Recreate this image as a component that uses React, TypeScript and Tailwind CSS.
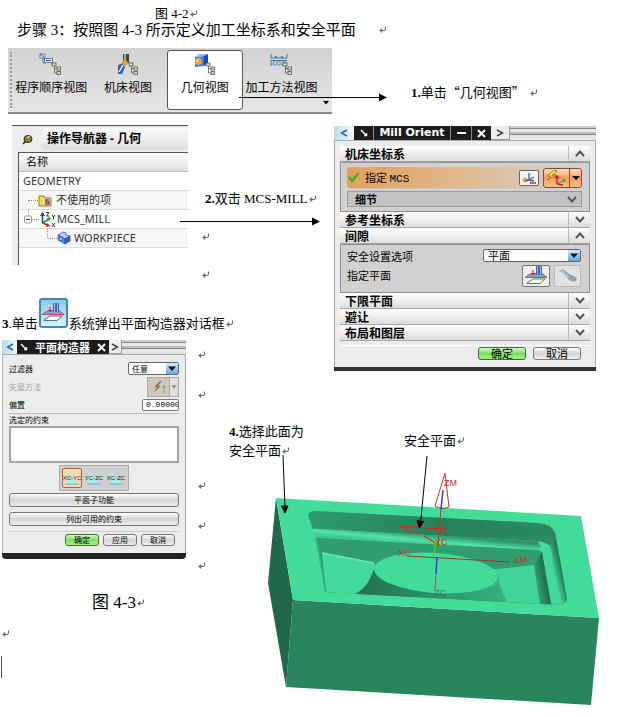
import type { ReactNode } from "react";

function ReturnMark() {
   return (
      <svg width="9" height="8" viewBox="0 0 9 8" fill="none" stroke="#666" className="shrink-0" aria-hidden="true">
         <path d="M7.500 0.500V3Q7.500 4.500 6 4.500H2" />
         <path d="M4 2.500L1.500 4.500L4 6.500Z" fill="#666" strokeWidth="0.500" />
      </svg>
   );
}

function TreeBadge() {
   return (
      <g fill="#d8d8cc" stroke="#55554c" strokeWidth="0.8">
         <path d="M15.500 12v8M15.500 15.500h3M15.500 20h3" fill="none" />
         <rect x="13" y="10" width="4" height="3" />
         <rect x="18" y="14" width="3.500" height="3" />
         <rect x="18" y="18.500" width="3.500" height="3" />
      </g>
   );
}

function ProgramIcon() {
   return (
      <svg width="24" height="22" viewBox="0 0 24 22" aria-hidden="true">
         <g fill="#eef3ff" stroke="#5b7ab8">
            <path d="M4 5v5h3M10 8h3v3" fill="none" />
            <rect x="1" y="1" width="5" height="4" />
            <rect x="5.500" y="5.500" width="8" height="4" />
         </g>
         <path d="M1 1l4 3M7 7.500h5" stroke="#2d4f9b" />
         <TreeBadge />
      </svg>
   );
}

function MachineIcon() {
   return (
      <svg width="24" height="22" viewBox="0 0 24 22" aria-hidden="true">
         <path d="M7 1h6v9H7z" fill="#444" />
         <path d="M8 1h2v8H8z" fill="#aaa" />
         <path d="M2 12l5-2 2 4-3 7H2z" fill="#335fae" />
         <path d="M3 19l4-7" stroke="#fff" strokeWidth="1.500" />
         <circle cx="9" cy="9.500" r="2.500" fill="#f2a71c" stroke="#b76d00" strokeWidth="0.5" />
         <TreeBadge />
      </svg>
   );
}

function GeometryIcon() {
   return (
      <svg width="24" height="22" viewBox="0 0 24 22" aria-hidden="true">
         <path d="M2 4l9-1v10l-9 1z" fill="#3d7bea" />
         <path d="M2 4l4-3h9l-4 2z" fill="#8fbcff" />
         <path d="M11 3l4-2v9l-4 3z" fill="#1c48ae" />
         <circle cx="5.500" cy="8.500" r="3.500" fill="#f6a82a" />
         <circle cx="4.500" cy="7.500" r="1.200" fill="#ffe3a0" />
         <TreeBadge />
      </svg>
   );
}

function MethodIcon() {
   return (
      <svg width="24" height="22" viewBox="0 0 24 22" fill="none" stroke="#3478a8" aria-hidden="true">
         <path d="M1 1v4h16V1M5 5l1-2 1 2M11 5l1-2 1 2" />
         <path d="M1 7.500h16M1 7.500v5l2-2 2 2 2-2 2 2 2-2 2 2 2-2v-3M4 8v2M7 8v2M10 8v2M13 8v2" />
         <TreeBadge />
      </svg>
   );
}

function PlaneIcon() {
   return (
      <svg width="24" height="20" viewBox="0 0 24 20" aria-hidden="true">
         <path d="M3 17l6-4h12l-5 4.500H3z" fill="#fff" stroke="#446655" strokeWidth="0.9" />
         <path d="M1 11.500l6-4h11l5 4z" fill="#7ea2d8" stroke="#d43a3a" strokeWidth="0.9" />
         <path d="M12 0h6v9h-6z" fill="#3e62b5" />
         <path d="M13.500 0v9M16.500 0v9" stroke="#9db9f0" />
         <path d="M9 4v5M7 7l2 2 2-2" stroke="#c22" fill="none" />
      </svg>
   );
}

function Chevron({ up = false }: { up?: boolean }) {
   return (
      <svg width="10" height="7" viewBox="0 0 10 7" fill="none" stroke="#555" strokeWidth="2" aria-hidden="true">
         <path d={up ? "M1 6L5 1.500L9 6" : "M1 1L5 5.500L9 1"} />
      </svg>
   );
}

function DropArrow() {
   return (
      <span className="pointer-events-none absolute right-px top-px bottom-px flex w-3 items-center justify-center bg-linear-to-b from-[#d5ebfc] to-[#58a7df]">
         <svg width="8" height="5" viewBox="0 0 8 5" aria-hidden="true">
            <path d="M0 0.5h8L4 5z" fill="#111" />
         </svg>
      </span>
   );
}

function TitleBar({ title, minimize = false }: { title: string; minimize?: boolean }) {
   return (
      <div className="flex h-[14px] items-stretch">
         <button aria-label="上一个" className={`flex items-center justify-center bg-linear-to-r from-[#bcd8ee] to-[#f6f8fa] ${minimize ? "w-5" : "w-[15px]"}`}>
            <svg width="8" height="8" viewBox="0 0 8 8" fill="none" stroke="#23699f" strokeWidth="1.500"><path d="M7 1L1.500 4L7 7" /></svg>
         </button>
         <button aria-label="移动" className={`flex items-center justify-center bg-[#1c1c1c] ${minimize ? "w-[19px]" : "w-[14px]"}`}>
            <svg width="8" height="8" viewBox="0 0 8 8" stroke="#fff" strokeWidth="1.500"><path d="M1 1L6 6" /><path d="M7 4v3H4z" fill="#fff" strokeWidth="0.5" /></svg>
         </button>
         <h2 className={minimize
            ? "w-[78px] border-x border-[#888] bg-[#1c1c1c] text-center font-['DejaVu_Sans',sans-serif] text-[11px] leading-[14px] font-bold whitespace-nowrap text-white"
            : "w-[63px] bg-[#1c1c1c] text-center text-[11px] leading-[14px] font-bold whitespace-nowrap text-white"}
         >
            {title}
         </h2>
         {minimize && (
            <button aria-label="最小化" className="flex w-[21px] items-center justify-center border-r border-[#888] bg-[#1c1c1c]">
               <span className="h-[2px] w-[9px] bg-white" />
            </button>
         )}
         <button aria-label="关闭" className={`flex items-center justify-center bg-[#1c1c1c] ${minimize ? "w-[19px]" : "w-[15px]"}`}>
            <svg width="9" height="9" viewBox="0 0 9 9" stroke="#fff" strokeWidth="2"><path d="M1 1L8 8M8 1L1 8" /></svg>
         </button>
         <button aria-label="下一个" className={`flex items-center justify-center border-r border-b border-[#999] bg-[#ededed] ${minimize ? "w-[19px]" : "w-[13px]"}`}>
            <svg width="8" height="8" viewBox="0 0 8 8" fill="none" stroke="#444" strokeWidth="1.500"><path d="M1 1L6.500 4L1 7" /></svg>
         </button>
         <div className="flex flex-1 flex-col justify-between bg-[#e6e6e6] pb-[5px]">
            <span className="h-[3px] border-b border-[#888] bg-[#ccc]" />
            <span className="h-[3px] border-b border-[#888] bg-[#bbb]" />
         </div>
      </div>
   );
}

function SectionHeader({ label, open = false }: { label: string; open?: boolean }) {
   return (
      <button className="flex h-4 w-full items-stretch border-b border-[#a5a5a5] bg-linear-to-b from-white to-[#dcdcdc] text-left text-xs leading-[15px] font-bold">
         <span className="flex-1 pl-[5px]">{label}</span>
         <span className="flex w-[22px] items-center justify-center border-l border-[#bbb]">
            <Chevron up={open} />
         </span>
      </button>
   );
}

function DialogButton({ children, primary = false, className = "" }: { children: ReactNode; primary?: boolean; className?: string }) {
   const look = primary
      ? "border-[#3c7030] bg-linear-to-b from-[#d8f8cc] via-[#7fdc62] to-[#a4f486]"
      : "border-[#777] bg-linear-to-b from-white via-[#d4d4d4] to-[#f0f0f0]";
   return (
      <button className={`flex items-center justify-center rounded-[3px] border ${look} ${className}`}>
         {children}
      </button>
   );
}

const views = [
   { label: "程序顺序视图", icon: <ProgramIcon /> },
   { label: "机床视图", icon: <MachineIcon /> },
   { label: "几何视图", icon: <GeometryIcon />, active: true },
   { label: "加工方法视图", icon: <MethodIcon /> },
];

function Toolbar() {
   return (
      <div className="flex h-[66px] w-[324px] border-b-2 border-[#858585] bg-linear-to-b from-[#d2d2d2] to-[#e6e6e6] font-['Noto_Sans_CJK_SC',sans-serif]">
         <div className="my-1 ml-[2px] w-[3px] border-l-2 border-dotted border-[#999]" />
         <div className="grid flex-1 grid-cols-4 py-[2px]">
            {views.map((v) => (
               <button
                  key={v.label}
                  className={v.active
                     ? "flex flex-col items-center gap-1 rounded-[3px] border border-[#555] bg-white pt-[2px] text-xs leading-4 whitespace-nowrap"
                     : "flex flex-col items-center gap-1 border border-transparent pt-[2px] text-xs leading-4 whitespace-nowrap"}
               >
                  {v.icon}
                  {v.label}
               </button>
            ))}
         </div>
         <button aria-label="工具栏选项" className="flex w-[12px] items-end justify-center pb-[7px]">
            <svg width="6" height="4" viewBox="0 0 6 4"><path d="M0 0h6L3 3.500z" /></svg>
         </button>
      </div>
   );
}

function LongArrow({ length }: { length: number }) {
   return (
      <svg width={length} height="9" aria-hidden="true">
         <path d={`M0 4.500H${length - 6}`} stroke="#000" />
         <path d={`M${length - 8} 0.500L${length} 4.500L${length - 8} 8.500Z`} />
      </svg>
   );
}

function Navigator() {
   return (
      <section className="ml-3 flex h-[140px] w-[176px] flex-col border-t border-[#555] bg-[#ececec] font-['Noto_Sans','Noto_Sans_CJK_SC',sans-serif]">
         <div className="flex h-[26px] items-center">
            <span className="flex w-[31px] justify-center">
               <svg width="11" height="11" viewBox="0 0 11 11" aria-hidden="true">
                  <path d="M1 10l3-3" stroke="#222" strokeWidth="1.500" />
                  <ellipse cx="6" cy="5" rx="4" ry="3.500" fill="#8b8a20" stroke="#222" />
                  <path d="M5 4l3-2" stroke="#fff" />
               </svg>
            </span>
            <h2 className="h-[22px] flex-1 bg-linear-to-b from-[#fafafa] to-[#ddd] pl-1 text-xs leading-[22px] font-bold whitespace-nowrap">操作导航器 - 几何</h2>
         </div>
         <div className="ml-[6px] flex-1 border-t border-l border-[#555] bg-white text-[11px] text-[#333]">
            <div className="h-[19px] border-b border-[#bbb] bg-linear-to-b from-white to-[#ddd] pl-[7px] leading-[18px] text-black">名称</div>
            <ul>
               <li className="h-[19px] border-b border-[#ddd] pl-1 leading-[18px]">GEOMETRY</li>
               <li className="flex h-[19px] items-center border-b border-[#ddd] bg-[#f6f6f6] pl-[9px] whitespace-nowrap">
                  <span className="w-[10px] border-t border-dotted border-[#888]" />
                  <svg width="14" height="13" viewBox="0 0 14 13" aria-hidden="true">
                     <path d="M1 2h5l1 2h6v8H1z" fill="#f3da62" stroke="#9b7c1f" />
                     <path d="M11 6H8v2h3v2H7" fill="none" stroke="#6d49a8" strokeWidth="1.500" />
                  </svg>
                  <span className="ml-1">不使用的项</span>
               </li>
               <li className="flex h-[19px] items-center border-b border-[#ddd] pl-[5px]">
                  <svg width="15" height="19" viewBox="0 0 15 19" fill="none" aria-hidden="true">
                     <path d="M4.500 0v6M8 9.500h7" stroke="#999" strokeDasharray="1 1" />
                     <rect x="0.500" y="6" width="7" height="7" rx="1" fill="#fff" stroke="#999" />
                     <path d="M2 9.500h4" stroke="#333" />
                  </svg>
                  <svg width="17" height="17" viewBox="0 0 17 17" fill="none" aria-hidden="true">
                     <path d="M3.500 12V3" stroke="#1c3f9e" strokeWidth="1.500" />
                     <path d="M1 5l2.500-4L6 5z" fill="#1c3f9e" />
                     <path d="M3.500 12L10 8" stroke="#18923a" strokeWidth="1.500" />
                     <path d="M12 6l-4 1 2 3z" fill="#18923a" />
                     <path d="M3.500 12l5 2" stroke="#c22020" strokeWidth="1.500" />
                     <path d="M11.500 15l-4.500 1 1-4z" fill="#c22020" />
                     <path d="M7 1.500h3L7.500 5H10.500M13 4l1.500 2L16 4M14.500 6v2.500M13 12l3 4M16 12l-3 4" stroke="#222" strokeWidth="0.900" />
                  </svg>
                  <span className="ml-px">MCS_MILL</span>
               </li>
               <li className="flex h-[19px] items-center border-b border-[#ddd] bg-[#f6f6f6] pl-[28px]">
                  <svg width="10" height="19" viewBox="0 0 10 19" fill="none" stroke="#999" strokeDasharray="1 1" aria-hidden="true">
                     <path d="M0.500 0v9.500H10" />
                  </svg>
                  <svg width="14" height="14" viewBox="0 0 14 14" stroke="#2c4fa3" strokeWidth="0.700" aria-hidden="true">
                     <path d="M1 4l5-3 3 1v2l4 1-5 3z" fill="#b6ccff" />
                     <path d="M1 4l7 4v5l-7-4z" fill="#5d89eb" />
                     <path d="M8 8l5-3v5l-5 3z" fill="#2f58bd" />
                     <circle cx="4" cy="8" r="1.500" fill="#dce7ff" />
                  </svg>
                  <span className="ml-[3px]">WORKPIECE</span>
               </li>
            </ul>
         </div>
      </section>
   );
}

function MillOrientDialog() {
   return (
      <section className="mt-px mr-11 border-b-4 border-[#333] bg-[#ececec] font-['Noto_Sans_CJK_SC',sans-serif] text-[11px]">
         <TitleBar title="Mill Orient" minimize />
         <div className="border-x border-t border-[#aaa] px-[5px] pt-[5px] pb-[7px]">
            <SectionHeader label="机床坐标系" open />
            <div className="flex h-[50px] flex-col gap-[3px] border border-[#909090] bg-[#d0d0d0] pt-1 pr-[7px] pb-1 pl-[6px]">
               <div className="flex h-[21px] items-center rounded-[3px] bg-linear-to-r from-[#e2a05c] via-[#dfb88e] via-50% to-[#d0d0d0]">
                  <svg width="13" height="11" viewBox="0 0 13 11" fill="none" stroke="#3ab52a" strokeWidth="2.500" aria-hidden="true"><path d="M2 5l3 4L11.500 1" /></svg>
                  <span className="flex-1 pl-[5px]">指定 <span className="font-['Liberation_Mono','Noto_Sans_CJK_SC',monospace]">MCS</span></span>
                  <button aria-label="CSYS 对话框" className="mr-1 flex h-4 w-5 items-center justify-center rounded-[2px] border border-[#666] bg-[#f5f5f5]">
                     <svg width="16" height="12" viewBox="0 0 16 12" fill="none" strokeWidth="1.300">
                        <circle cx="4" cy="8" r="2.500" fill="#e8a35b" />
                        <path d="M8 1v7l-4 1M8 8l5-3" stroke="#3457b7" />
                        <path d="M8 8l5 1" stroke="#c33" />
                        <path d="M9 11h6" stroke="#222" strokeWidth="1.500" strokeDasharray="1.500 0.700" />
                     </svg>
                  </button>
                  <div className="flex h-5 w-[39px] overflow-hidden rounded-[3px] border border-[#8d4a25] bg-linear-to-b from-[#ffe0c8] via-[#f79a5b] to-[#ffc08f]">
                     <button aria-label="自动判断" className="flex w-[25px] items-center justify-center">
                        <svg width="23" height="18" viewBox="0 0 23 18" fill="none" strokeWidth="1.300">
                           <path d="M9 1L2 7h4l-4 4 9-5H7l5-4z" fill="#f9e94b" stroke="#7d6c11" strokeWidth="0.800" />
                           <path d="M12 15V7M10 9l2-2 2 2" stroke="#b22020" />
                           <path d="M12 15l8-4M18 10l2 1-1 2" stroke="#3c9b36" />
                           <path d="M12 15l6 1" stroke="#a33" />
                        </svg>
                     </button>
                     <button aria-label="更多" className="flex flex-1 items-center justify-center border-l border-[#8d4a25]">
                        <svg width="8" height="4" viewBox="0 0 8 4"><path d="M0 0h8L4 4z" /></svg>
                     </button>
                  </div>
               </div>
               <button className="flex h-4 items-center justify-between border border-[#999] bg-[#c2c2c2] pr-1 pl-[7px] font-bold">
                  细节
                  <Chevron />
               </button>
            </div>
            <SectionHeader label="参考坐标系" />
            <SectionHeader label="间隙" open />
            <div className="flex h-[49px] flex-col border border-[#909090] bg-[#d0d0d0] pt-1 pr-2 pl-[6px]">
               <div className="flex h-[13px] items-center justify-between">
                  <label htmlFor="clearance">安全设置选项</label>
                  <span className="relative h-[13px] w-[98px]">
                     <select id="clearance" className="block h-full w-full appearance-none rounded-[2px] border border-[#666] bg-white pl-1 text-[11px] leading-[11px]">
                        <option>平面</option>
                     </select>
                     <DropArrow />
                  </span>
               </div>
               <div className="mt-[3px] flex justify-between">
                  <span className="leading-5">指定平面</span>
                  <span className="flex gap-1">
                     <button aria-label="指定平面" className="flex h-[22px] w-7 items-center justify-center rounded-[2px] border border-[#777] bg-[#eee]"><PlaneIcon /></button>
                     <button aria-label="显示" className="flex h-[22px] w-[27px] items-center justify-center rounded-[2px] border border-[#bbb] bg-[#e2e2e2]">
                        <svg width="20" height="16" viewBox="0 0 20 16"><path d="M1 3l4-2 6 5 7 3q2 3-2 5l-5-2-3-4z" fill="#96a0ac" /><path d="M3 3l8 6" stroke="#c5ccd4" strokeWidth="1.500" /></svg>
                     </button>
                  </span>
               </div>
            </div>
            <SectionHeader label="下限平面" />
            <SectionHeader label="避让" />
            <SectionHeader label="布局和图层" />
            <div className="mt-1 flex justify-end gap-[7px] border-t border-white pt-px pr-[9px]">
               <DialogButton primary className="h-[13px] w-12 leading-[11px]">确定</DialogButton>
               <DialogButton className="h-[13px] w-12 leading-[11px]">取消</DialogButton>
            </div>
         </div>
      </section>
   );
}

const planes = ["XC-YC", "YC-ZC", "XC-ZC"];

function PlaneDialog() {
   return (
      <section className="ml-[2px] w-[184px] rounded-b-[4px] border-b-[6px] border-[#222] bg-[#ececec] font-['Noto_Sans_CJK_SC',sans-serif] text-[8px]">
         <TitleBar title="平面构造器" />
         <div className="flex flex-col border-x border-t border-[#aaa] px-[6px] pt-[7px] pb-[7px]">
            <div className="flex h-[13px] items-center justify-between">
               <label htmlFor="filter">过滤器</label>
               <span className="relative h-[13px] w-[51px]">
                  <select id="filter" className="block h-full w-full appearance-none rounded-[2px] border border-[#666] bg-white pl-[3px] text-[8px] leading-[11px]">
                     <option>任意</option>
                  </select>
                  <DropArrow />
               </span>
            </div>
            <div className="mt-[2px] flex h-5 items-center justify-between text-[#a5a5a5]">
               <span>矢量方法</span>
               <span className="flex h-5 w-8 border border-[#aaa] bg-[#e4e0d8]">
                  <button aria-label="矢量方法" disabled className="flex w-[21px] items-center justify-center bg-[#cec6b6]">
                     <svg width="16" height="16" viewBox="0 0 16 16"><path d="M9 2L3 8h3l-4 6 8-7H7l4-5z" fill="#8b7a55" /><path d="M13 14V7M11.500 9L13 6.500L14.500 9" stroke="#997" fill="none" /></svg>
                  </button>
                  <button aria-label="更多方法" disabled className="flex flex-1 items-center justify-center border-l border-[#aaa]">
                     <svg width="6" height="4" viewBox="0 0 6 4"><path d="M0 0h6L3 4z" fill="#999" /></svg>
                  </button>
               </span>
            </div>
            <div className="mt-[2px] flex h-3 items-center justify-between">
               <label htmlFor="offset">偏置</label>
               <input id="offset" defaultValue="0.00000" className="h-3 w-[37px] rounded-[2px] border border-[#777] bg-white pl-[3px] font-['Liberation_Mono',monospace] text-[8px]" />
            </div>
            <label htmlFor="constraints" className="mt-[2px] border-t border-[#bbb] leading-3">选定的约束</label>
            <textarea id="constraints" className="h-[37px] w-full resize-none border-2 border-[#a2a2a2] bg-white" />
            <div className="mx-auto mt-[2px] flex h-[26px] w-[70px] items-center justify-center gap-[2px] border border-[#aaa] bg-[#cfcfcf]">
               {planes.map((p, i) => (
                  <button
                     key={p}
                     aria-label={p}
                     className={i === 0
                        ? "flex h-5 w-5 items-center justify-center rounded-[2px] border border-[#b4602c] bg-[#fbd5b5]"
                        : "flex h-5 w-5 items-center justify-center"}
                  >
                     <svg width="18" height="18" viewBox="0 0 18 18" className="shrink-0">
                        <path d="M4 2L15 15H4z" fill="#a8ecec" />
                        <path d="M2 15h14" stroke="#52bcc2" />
                        <text x="9" y="11" textAnchor="middle" fontSize="6" fontFamily="Liberation Sans, sans-serif" fill="#222">{p}</text>
                     </svg>
                  </button>
               ))}
            </div>
            <DialogButton className="mt-[2px] h-[14px] w-full leading-3">平面子功能</DialogButton>
            <DialogButton className="mt-[5px] h-[14px] w-full leading-3">列出可用的约束</DialogButton>
            <div className="mt-[5px] flex justify-end gap-1 border-t border-[#ccc] pt-[2px] pr-1">
               <DialogButton primary className="h-3 w-[34px] leading-[10px]">确定</DialogButton>
               <DialogButton className="h-3 w-[34px] leading-[10px]">应用</DialogButton>
               <DialogButton className="h-3 w-[34px] leading-[10px]">取消</DialogButton>
            </div>
         </div>
      </section>
   );
}

function PartModel() {
   return (
      <svg width="415" height="317" viewBox="225 400 415 317" role="img" aria-label="型腔零件">
         <defs>
            <linearGradient id="wall" x1="0" y1="0" x2="1" y2="0">
               <stop offset="0" stopColor="#2f9a6d" />
               <stop offset="0.5" stopColor="#278259" />
               <stop offset="1" stopColor="#2b8b61" />
            </linearGradient>
            <linearGradient id="ledge" gradientUnits="userSpaceOnUse" x1="425" y1="534" x2="424" y2="545">
               <stop offset="0" stopColor="#2d9468" />
               <stop offset="0.6" stopColor="#55e2aa" />
               <stop offset="1" stopColor="#3cc98d" />
            </linearGradient>
            <linearGradient id="under" x1="0" y1="0" x2="1" y2="0">
               <stop offset="0" stopColor="#226f4e" />
               <stop offset="1" stopColor="#35b37f" />
            </linearGradient>
            <linearGradient id="side" gradientUnits="userSpaceOnUse" x1="554" y1="576" x2="562" y2="574">
               <stop offset="0" stopColor="#44d79a" />
               <stop offset="1" stopColor="#247f5a" />
            </linearGradient>
            <linearGradient id="inner" gradientUnits="userSpaceOnUse" x1="535" y1="583" x2="546" y2="581">
               <stop offset="0" stopColor="#33a776" />
               <stop offset="1" stopColor="#1f704e" />
            </linearGradient>
         </defs>
         <path d="M276 498L293 600L286 687L268 583Z" fill="#206849" />
         <path d="M293 600L599 618L591 705L286 687Z" fill="#28855e" />
         <path d="M276 498L581 516L599 618L293 600Z" fill="#42db9a" />
         <path d="M308 516Q308 511 317 511L538 523Q552 524 555 532L567 599Q567 604 557 605L325 592L316 538Z" fill="url(#wall)" />
         <path d="M308 516L312 530L316 538L325 592L293 600Z" fill="#42db9a" />
         <path d="M545 546Q552 546 556 538L567 599Q567 604 557 605L551 604Z" fill="url(#side)" />
         <path d="M312 530Q313 528 318 529L538 541Q549 542 551 549L558 605L550 604L541 552L316 538Z" fill="#44d79a" />
         <path d="M312 530Q313 528 318 529L538 541L542 550L316 538Z" fill="url(#ledge)" />
         <path d="M316 538L538 550Q541 550 542 554L551 604L325 592Z" fill="#2f9d70" />
         <path d="M322 553L374 563L376 570Q368 588 354 594L326 592Z" fill="#43d99a" />
         <path d="M322 553L374 563" stroke="#68e8b6" strokeWidth="1.500" />
         <path d="M316 538L326 592" stroke="#36b480" strokeWidth="1.500" />
         <path d="M484 570Q512 568 531 565Q535 565 536 569L541 604L507 602Q499 588 498 575Z" fill="#40d596" />
         <path d="M534 566L542 552L551 604H540Z" fill="url(#inner)" />
         <path d="M374 569Q368 587 357 594L507 602Q499 590 498 577Z" fill="url(#under)" />
         <ellipse cx="436" cy="573" rx="62" ry="20" fill="#42db9a" transform="rotate(4 436 573)" />
         <g fill="none" stroke="#d82a22">
            <path d="M445 473L435 506Q441 510 449 507Z" />
            <path d="M441 508L438 546" />
            <path d="M400 527H422M426 528.500H443M400 527L419 534M424 536L440 546" strokeWidth="1.300" />
            <path d="M407 556L510 562" stroke="#9b3926" />
            <path d="M443 490L441 509M437 557L436 574" stroke="#1c42d6" strokeWidth="1.500" />
            <path d="M436 538L434 556" stroke="#3fdd16" strokeWidth="1.500" />
            <path d="M436 574L435 591" stroke="#856b50" />
         </g>
         <g fill="#d82a22" fontFamily="Liberation Sans, sans-serif" fontSize="9">
            <text x="444" y="486">ZM</text>
            <text x="434" y="533">YM</text>
            <text x="435" y="545">YC</text>
            <text x="398" y="556">XC</text>
            <text x="514" y="563">XM</text>
            <text x="434" y="596" fill="#447961">ZC</text>
         </g>
         <g stroke="#000">
            <path d="M283 455L285 508M427 456L420.500 523" />
            <path d="M281.500 506H288L285 513Z" />
            <path d="M417 520.500L423.500 521.500L419.500 528Z" />
         </g>
      </svg>
   );
}

export default function App() {
   return (
      <main className="min-h-screen overflow-x-hidden bg-white font-['Liberation_Serif','Noto_Sans_CJK_SC',serif] text-[13px] leading-4 text-black">
         <header className="pt-[6px]">
            <p className="flex items-center pl-[155px]">图 4-2<ReturnMark /></p>
            <h1 className="flex items-center gap-[22px] pl-[17px] text-[15px]">步骤 3：按照图 4-3 所示定义加工坐标系和安全平面<ReturnMark /></h1>
         </header>

         <div className="relative mt-[10px] flex pl-2">
            <Toolbar />
            <div className="absolute top-[45px] left-[239px]"><LongArrow length={148} /></div>
            <p className="mt-9 ml-[79px] flex items-center gap-1 self-start whitespace-nowrap">
               <span><b>1.</b>单击<span className="font-['Noto_Sans_CJK_SC',sans-serif]">“几何视图”</span></span>
               <ReturnMark />
            </p>
         </div>

         <div className="mt-[11px] grid grid-cols-[197px_28px_109px_1fr] grid-rows-[172px_43px_60px_auto]">
            <div className="col-start-1 row-start-1"><Navigator /></div>
            <div className="relative col-span-2 col-start-2 row-start-1 pt-[66px] pl-2">
               <p className="flex items-center whitespace-nowrap"><span><b>2.</b>双击 MCS-MILL</span><ReturnMark /></p>
               <div className="absolute top-[92px] -left-[17px]"><LongArrow length={140} /></div>
               <div className="mt-[26px] -ml-1 flex flex-col gap-[30px]"><ReturnMark /><ReturnMark /></div>
            </div>
            <div className="col-start-4 row-span-3 row-start-1"><MillOrientDialog /></div>

            <p className="col-span-3 col-start-1 row-start-2 flex items-end pb-2 pl-[2px] whitespace-nowrap">
               <span><b>3</b>.单击</span>
               <span className="mx-px mb-1 flex h-[30px] w-[29px] items-center justify-center rounded-[3px] border-2 border-[#3b8cae] bg-linear-to-b from-[#8fc9ea] to-[#d8f3fb]"><PlaneIcon /></span>
               <span>系统弹出平面构造器对话框</span>
               <span className="pb-1"><ReturnMark /></span>
            </p>

            <div className="col-start-1 row-span-2 row-start-3">
               <PlaneDialog />
               <p className="mt-9 flex items-center pl-[92px] text-[17px]">图 4-3<ReturnMark /></p>
               <div className="mt-[19px] pl-px"><ReturnMark /></div>
               <div className="mt-[18px] h-[22px] w-[2px] border-r border-[#555]" />
            </div>
            <div className="col-start-2 row-span-2 row-start-3 flex flex-col gap-8 pt-[11px]">
               <ReturnMark />
               <ReturnMark />
               <div className="mt-[51px]"><ReturnMark /></div>
               <ReturnMark />
               <ReturnMark />
            </div>
            <figure className="relative col-span-2 col-start-3 row-start-4">
               <PartModel />
               <p className="absolute top-[22px] left-[4px] leading-[19px] whitespace-nowrap">
                  <b>4.</b>选择此面为<br />
                  <span className="flex items-center">安全平面<ReturnMark /></span>
               </p>
               <p className="absolute top-[33px] left-[179px] flex items-center whitespace-nowrap">安全平面<ReturnMark /></p>
            </figure>
         </div>
      </main>
   );
}
